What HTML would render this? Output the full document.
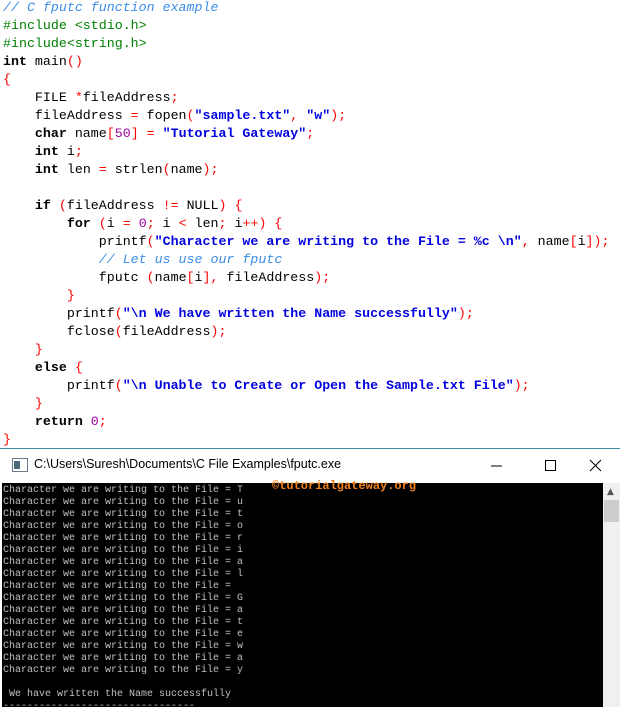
<!DOCTYPE html><html><head><style>
body{margin:0;width:620px;height:706px;overflow:hidden;background:#fff;position:relative}
pre{margin:0;position:absolute;left:3px;top:-1px;font-family:"Liberation Mono",monospace;font-size:13.3px;line-height:18px;color:#000}
.k{font-weight:bold}.c{color:#3a8ee6;font-style:italic}.p{color:#008000}.s{color:#0000e0;font-weight:bold}.o{color:#f00}.n{color:#a000a0}
.win{position:absolute;left:0;top:448px;width:620px;height:258px;background:#fff;border-top:1px solid #3a8ea0}
.title{position:absolute;left:34px;top:8px;font-family:"Liberation Sans",sans-serif;font-size:12.5px;color:#000}
.con{position:absolute;left:2px;top:34px;width:601px;height:224px;background:#000}
.con pre{left:1px;top:2px;font-size:10px;line-height:12px;color:#c0c0c0}
.sb{position:absolute;left:603px;top:34px;width:17px;height:224px;background:#f0f0f0}
</style></head><body>
<pre><span class="c">// C fputc function example</span>
<span class="p">#include &lt;stdio.h&gt;</span>
<span class="p">#include&lt;string.h&gt;</span>
<span class="k">int</span> main<span class="o">()</span>
<span class="o">{</span>
    FILE <span class="o">*</span>fileAddress<span class="o">;</span>
    fileAddress <span class="o">=</span> fopen<span class="o">(</span><span class="s">"sample.txt"</span><span class="o">,</span> <span class="s">"w"</span><span class="o">);</span>
    <span class="k">char</span> name<span class="o">[</span><span class="n">50</span><span class="o">]</span> <span class="o">=</span> <span class="s">"Tutorial Gateway"</span><span class="o">;</span>
    <span class="k">int</span> i<span class="o">;</span>
    <span class="k">int</span> len <span class="o">=</span> strlen<span class="o">(</span>name<span class="o">);</span>

    <span class="k">if</span> <span class="o">(</span>fileAddress <span class="o">!=</span> NULL<span class="o">)</span> <span class="o">{</span>
        <span class="k">for</span> <span class="o">(</span>i <span class="o">=</span> <span class="n">0</span><span class="o">;</span> i <span class="o">&lt;</span> len<span class="o">;</span> i<span class="o">++)</span> <span class="o">{</span>
            printf<span class="o">(</span><span class="s">"Character we are writing to the File = %c \n"</span><span class="o">,</span> name<span class="o">[</span>i<span class="o">]);</span>
            <span class="c">// Let us use our fputc</span>
            fputc <span class="o">(</span>name<span class="o">[</span>i<span class="o">],</span> fileAddress<span class="o">);</span>
        <span class="o">}</span>
        printf<span class="o">(</span><span class="s">"\n We have written the Name successfully"</span><span class="o">);</span>
        fclose<span class="o">(</span>fileAddress<span class="o">);</span>
    <span class="o">}</span>
    <span class="k">else</span> <span class="o">{</span>
        printf<span class="o">(</span><span class="s">"\n Unable to Create or Open the Sample.txt File"</span><span class="o">);</span>
    <span class="o">}</span>
    <span class="k">return</span> <span class="n">0</span><span class="o">;</span>
<span class="o">}</span></pre>
<div class="win">
<svg style="position:absolute;left:12px;top:9px" width="16" height="14"><rect x="0.5" y="0.5" width="15" height="13" fill="#fff" stroke="#6a7a8a"/><rect x="2" y="3" width="6" height="8" fill="#4a6a7a"/></svg>
<div class="title">C:\Users\Suresh\Documents\C File Examples\fputc.exe</div>
<svg style="position:absolute;left:490px;top:10px" width="120" height="14"><line x1="1" y1="7" x2="12" y2="7" stroke="#000"/><rect x="55.5" y="1.5" width="10" height="10" fill="none" stroke="#000"/><path d="M100 1L111 12M111 1L100 12" stroke="#000"/></svg>
<div class="con"><pre>Character we are writing to the File = T
Character we are writing to the File = u
Character we are writing to the File = t
Character we are writing to the File = o
Character we are writing to the File = r
Character we are writing to the File = i
Character we are writing to the File = a
Character we are writing to the File = l
Character we are writing to the File = 
Character we are writing to the File = G
Character we are writing to the File = a
Character we are writing to the File = t
Character we are writing to the File = e
Character we are writing to the File = w
Character we are writing to the File = a
Character we are writing to the File = y

 We have written the Name successfully
--------------------------------</pre>
<div style="position:absolute;left:270px;top:-4px;font-family:'Liberation Mono',monospace;font-weight:bold;font-size:12px;color:#f08020">©tutorialgateway.org</div></div>
<div class="sb"><div style="position:absolute;left:4px;top:4px;font-size:9px;color:#555;font-family:'DejaVu Sans',sans-serif">▲</div><div style="position:absolute;left:1px;top:17px;width:15px;height:22px;background:#cdcdcd"></div></div>
</div>
</body></html>
